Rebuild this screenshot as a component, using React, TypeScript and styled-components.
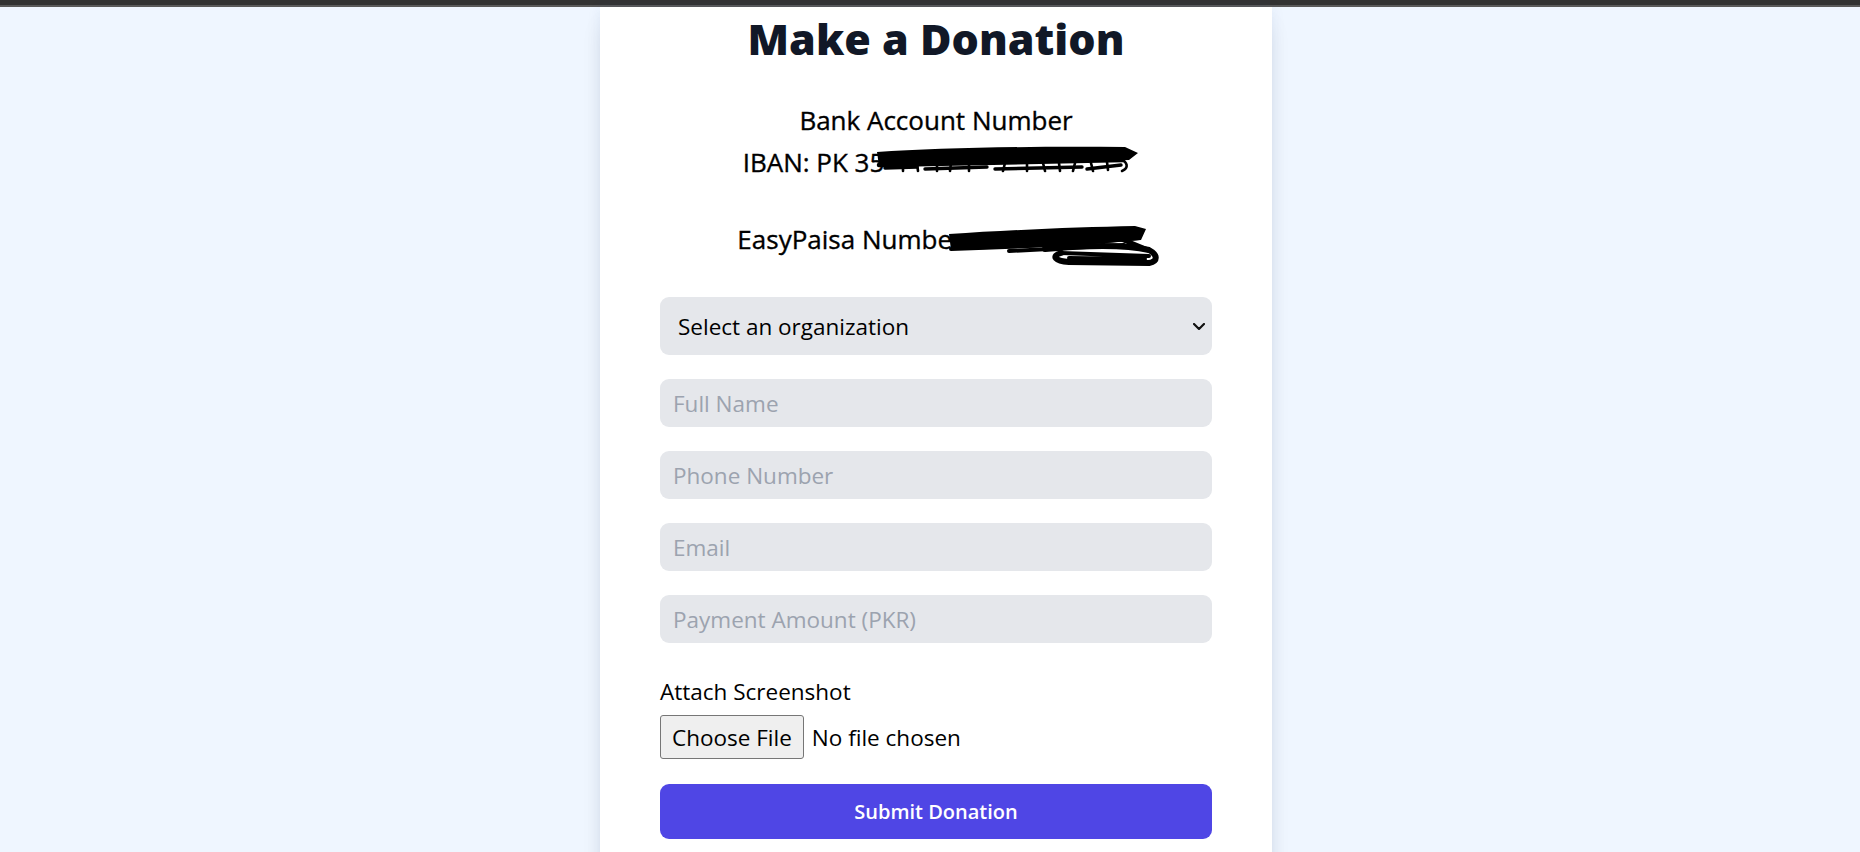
import React from "react";
import styled, { createGlobalStyle } from "styled-components";

const GlobalStyle = createGlobalStyle`
  html, body {
    margin: 0;
    padding: 0;
    overflow: hidden;
    background: #eff6ff;
  }
  body {
    font-family: "Open Sans", "Noto Sans", sans-serif;
    color: #000;
  }
  * { box-sizing: border-box; }
`;

const BrowserEdge = styled.div`
  height: 7px;
  background: #333333;
  border-bottom: 2px solid #5a5a5a;
`;

const Page = styled.main`
  display: flex;
  justify-content: center;
  padding-left: 12px;
  min-height: 845px;
`;

const Card = styled.section`
  width: 672px;
  background: #ffffff;
  padding: 5px 60px 60px;
  box-shadow: 0 0 14px rgba(30, 58, 138, 0.07), 0 15px 22px -4px rgba(0, 0, 0, 0.1);
`;

const Title = styled.h1`
  margin: 0 0 36px;
  font-size: 43px;
  line-height: 54px;
  font-weight: 800;
  color: #111827;
  text-align: center;
`;

const Info = styled.div`
  text-align: center;
`;

const InfoLine = styled.p<{ $gap: number }>`
  margin: 0 0 ${(p) => p.$gap}px;
  font-size: 26px;
  line-height: 36px;
  font-weight: 400;
  -webkit-text-stroke: 0.35px #000;
  white-space: nowrap;
`;

const Redacted = styled.span<{ $w: number }>`
  position: relative;
  display: inline-block;
  width: ${(p) => p.$w}px;
  height: 26px;
`;

const Scribble = styled.svg<{ $left: number; $top: number }>`
  position: absolute;
  left: ${(p) => p.$left}px;
  top: ${(p) => p.$top}px;
  overflow: visible;
`;

const Form = styled.form`
  display: flex;
  flex-direction: column;
  gap: 24px;
`;

const SelectWrap = styled.div`
  position: relative;
`;

const Select = styled.select`
  appearance: none;
  -webkit-appearance: none;
  width: 100%;
  height: 58px;
  padding: 0 40px 0 18px;
  border: none;
  border-radius: 9px;
  background: #e5e7eb;
  font-family: inherit;
  font-size: 22.5px;
  color: #000;
  outline: none;
`;

const Chevron = styled.svg`
  position: absolute;
  right: 7px;
  top: 50%;
  margin-top: -3.5px;
  width: 12px;
  height: 7px;
  pointer-events: none;
`;

const Input = styled.input`
  width: 100%;
  height: 48px;
  padding: 0 13px;
  border: none;
  border-radius: 9px;
  background: #e5e7eb;
  font-family: inherit;
  font-size: 22.5px;
  color: #000;
  outline: none;
  &::placeholder {
    color: #9ca3af;
    opacity: 1;
  }
`;

const AttachGroup = styled.div`
  margin-top: 7px;
  display: flex;
  flex-direction: column;
  gap: 5px;
`;

const Label = styled.label`
  font-size: 22.5px;
  line-height: 36px;
`;

const FileInput = styled.input`
  display: block;
  height: 44px;
  font-family: inherit;
  font-size: 22.5px;
  color: #000;
  &::file-selector-button {
    height: 44px;
    padding: 0 11px;
    margin-right: 8px;
    border: 1px solid #767676;
    border-radius: 3px;
    background: #efefef;
    font-family: inherit;
    font-size: 22.5px;
    color: #000;
  }
`;

const Submit = styled.button`
  width: 100%;
  height: 55px;
  margin-top: 1px;
  border: none;
  border-radius: 9px;
  background: #4f46e5;
  color: #ffffff;
  font-family: inherit;
  font-size: 20px;
  font-weight: 600;
`;

const IbanScribble = () => (
  <Scribble $left={-7} $top={1} width="262" height="26" viewBox="0 0 262 26">
    <path d="M0 5 C60 1 150 -1 248 0 L261 6 L252 13 C200 15 150 16 100 17 C60 18 30 18 2 19 Z" fill="#000" />
    <g stroke="#000" fill="none" strokeLinecap="round" strokeLinejoin="round">
      <path d="M2 18 C80 16 160 15 246 13" strokeWidth="4.5" />
      <path d="M8 21 L40 20 M48 22 L110 20 M118 22 L205 20 M210 22 L244 18" strokeWidth="3.4" />
      <path d="M243 12 C251 15 252 21 245 24" strokeWidth="2.6" />
      <path d="M26 16 L26 24 M40 16 L41 24 M60 16 L60 24 M74 16 L73 24 M92 16 L92 24 M128 16 L126 24 M150 17 L150 24 M166 16 L168 24 M182 16 L183 24 M198 16 L196 24 M214 16 L216 24 M230 15 L231 23" strokeWidth="2.6" />
    </g>
  </Scribble>
);

const PhoneScribble = () => (
  <Scribble $left={-14} $top={3} width="212" height="40" viewBox="0 0 212 40">
    <path d="M0 8 C60 4 130 1 186 0 L197 3 L192 14 C150 18 110 20 70 22 C40 23 20 24 2 24 Z" fill="#000" />
    <g stroke="#000" fill="none" strokeLinecap="round" strokeLinejoin="round">
      <path d="M2 23 C70 21 130 18 190 12" strokeWidth="4" />
      <path d="M60 25 L175 19" strokeWidth="4" />
      <path d="M96 23 C140 19 178 19 200 24 C209 29 209 35 200 37 L120 36 C106 35 102 30 112 27" strokeWidth="6" />
      <path d="M165 10 L199 24" strokeWidth="5" />
      <path d="M112 27 L200 30 M120 32 L196 33" strokeWidth="4" />
    </g>
  </Scribble>
);

export default function App() {
  return (
    <>
      <GlobalStyle />
      <BrowserEdge />
      <Page>
        <Card>
          <Title>Make a Donation</Title>
          <Info>
            <InfoLine $gap={6}>Bank Account Number</InfoLine>
            <InfoLine $gap={41}>
              IBAN: PK 35
              <Redacted $w={245}>
                <IbanScribble />
              </Redacted>
            </InfoLine>
            <InfoLine $gap={40}>
              EasyPaisa Number
              <Redacted $w={172}>
                <PhoneScribble />
              </Redacted>
            </InfoLine>
          </Info>
          <Form onSubmit={(e) => e.preventDefault()}>
            <SelectWrap>
              <Select defaultValue="">
                <option value="">Select an organization</option>
              </Select>
              <Chevron viewBox="0 0 12 7">
                <polyline points="1,1 6,6 11,1" fill="none" stroke="#111" strokeWidth="2.2" strokeLinecap="round" strokeLinejoin="round" />
              </Chevron>
            </SelectWrap>
            <Input type="text" placeholder="Full Name" />
            <Input type="tel" placeholder="Phone Number" />
            <Input type="email" placeholder="Email" />
            <Input type="number" placeholder="Payment Amount (PKR)" />
            <AttachGroup>
              <Label htmlFor="shot">Attach Screenshot</Label>
              <FileInput id="shot" type="file" />
            </AttachGroup>
            <Submit type="submit">Submit Donation</Submit>
          </Form>
        </Card>
      </Page>
    </>
  );
}
